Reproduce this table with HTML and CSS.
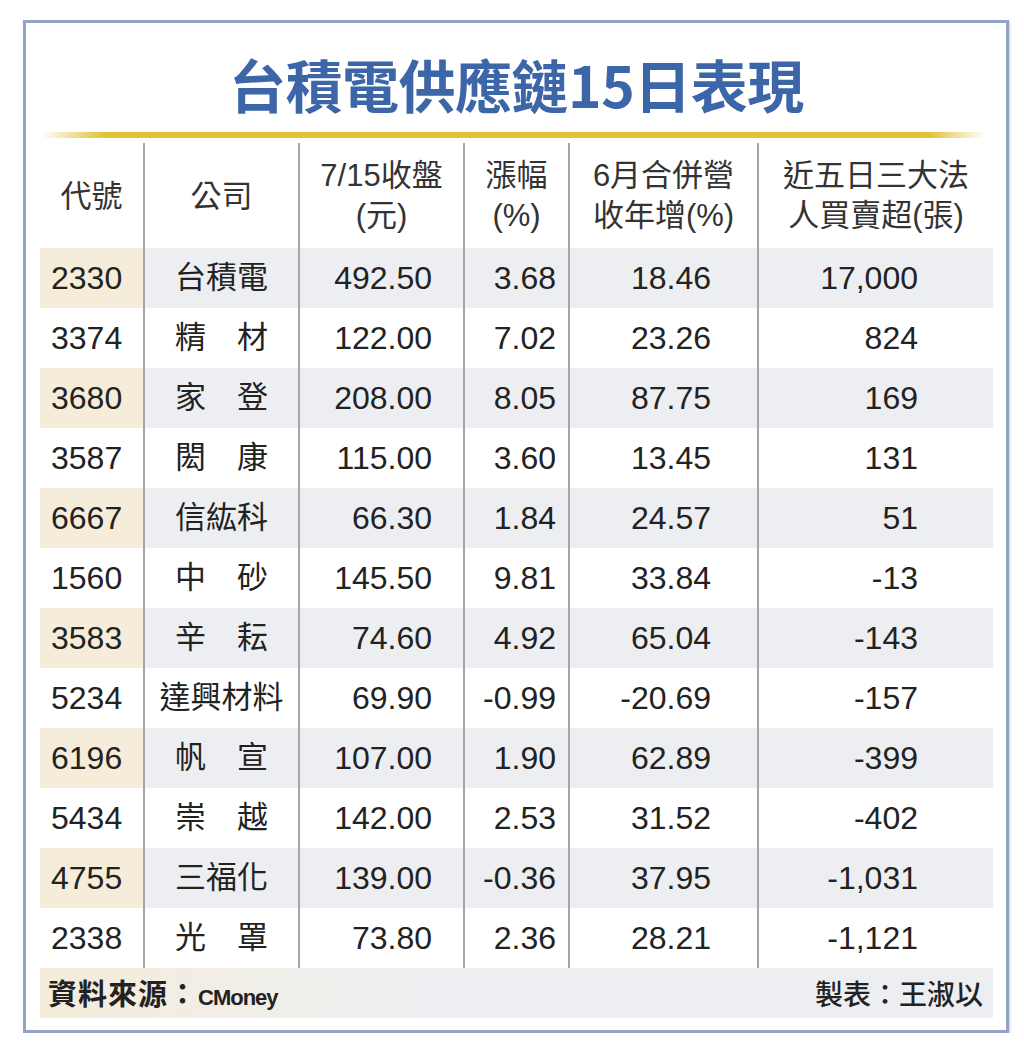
FILE: index.html
```html
<!DOCTYPE html>
<html lang="zh-Hant">
<head>
<meta charset="utf-8">
<title>台積電供應鏈15日表現</title>
<link rel="stylesheet" href="styles.css">
</head>
<body>
<div class="frame">
  <h1 class="title">台積電供應鏈15日表現</h1>
  <div class="gold"></div>
  <div class="table">
    <div class="row head">
      <div class="cell c1">代號</div>
      <div class="cell c2">公司</div>
      <div class="cell c3"><span>7/15收盤</span><span>(元)</span></div>
      <div class="cell c4"><span>漲幅</span><span>(%)</span></div>
      <div class="cell c5"><span>6月合併營</span><span>收年增(%)</span></div>
      <div class="cell c6"><span>近五日三大法</span><span>人買賣超(張)</span></div>
    </div>
    <div class="row alt"><div class="cell c1">2330</div><div class="cell c2">台積電</div><div class="cell c3">492.50</div><div class="cell c4">3.68</div><div class="cell c5">18.46</div><div class="cell c6">17,000</div></div>
    <div class="row"><div class="cell c1">3374</div><div class="cell c2">精　材</div><div class="cell c3">122.00</div><div class="cell c4">7.02</div><div class="cell c5">23.26</div><div class="cell c6">824</div></div>
    <div class="row alt"><div class="cell c1">3680</div><div class="cell c2">家　登</div><div class="cell c3">208.00</div><div class="cell c4">8.05</div><div class="cell c5">87.75</div><div class="cell c6">169</div></div>
    <div class="row"><div class="cell c1">3587</div><div class="cell c2">閎　康</div><div class="cell c3">115.00</div><div class="cell c4">3.60</div><div class="cell c5">13.45</div><div class="cell c6">131</div></div>
    <div class="row alt"><div class="cell c1">6667</div><div class="cell c2">信紘科</div><div class="cell c3">66.30</div><div class="cell c4">1.84</div><div class="cell c5">24.57</div><div class="cell c6">51</div></div>
    <div class="row"><div class="cell c1">1560</div><div class="cell c2">中　砂</div><div class="cell c3">145.50</div><div class="cell c4">9.81</div><div class="cell c5">33.84</div><div class="cell c6">-13</div></div>
    <div class="row alt"><div class="cell c1">3583</div><div class="cell c2">辛　耘</div><div class="cell c3">74.60</div><div class="cell c4">4.92</div><div class="cell c5">65.04</div><div class="cell c6">-143</div></div>
    <div class="row"><div class="cell c1">5234</div><div class="cell c2">達興材料</div><div class="cell c3">69.90</div><div class="cell c4">-0.99</div><div class="cell c5">-20.69</div><div class="cell c6">-157</div></div>
    <div class="row alt"><div class="cell c1">6196</div><div class="cell c2">帆　宣</div><div class="cell c3">107.00</div><div class="cell c4">1.90</div><div class="cell c5">62.89</div><div class="cell c6">-399</div></div>
    <div class="row"><div class="cell c1">5434</div><div class="cell c2">崇　越</div><div class="cell c3">142.00</div><div class="cell c4">2.53</div><div class="cell c5">31.52</div><div class="cell c6">-402</div></div>
    <div class="row alt"><div class="cell c1">4755</div><div class="cell c2">三福化</div><div class="cell c3">139.00</div><div class="cell c4">-0.36</div><div class="cell c5">37.95</div><div class="cell c6">-1,031</div></div>
    <div class="row"><div class="cell c1">2338</div><div class="cell c2">光　罩</div><div class="cell c3">73.80</div><div class="cell c4">2.36</div><div class="cell c5">28.21</div><div class="cell c6">-1,121</div></div>
    <div class="foot">
      <div class="source">資料來源：<span class="brand">CMoney</span></div>
      <div class="author">製表：王淑以</div>
    </div>
  </div>
</div>
</body>
</html>
```
FILE: styles.css
```css
* { box-sizing: border-box; }
html, body { margin: 0; padding: 0; background: #ffffff; }
body {
  font-family: "Liberation Sans", "Noto Sans CJK TC", sans-serif;
  color: #222;
}
.frame {
  margin: 20px 0 0 23px;
  width: 986px;
  height: 1013px;
  border: 3px solid #93a3c5;
  box-shadow: 1px 1px 2px rgba(120, 135, 170, 0.4);
  padding: 32px 13px 12px 14px;
  background: #fff;
}
.title {
  margin: 0;
  height: 56px;
  line-height: 56px;
  font-family: "Noto Sans CJK TC", sans-serif;
  font-size: 57px;
  font-weight: 700;
  color: #3d66a9;
  text-align: center;
  letter-spacing: -0.5px;
}
.gold {
  margin-top: 21px;
  width: 945px;
  height: 6px;
  border-radius: 3px;
  background: linear-gradient(to right, rgba(228, 196, 48, 0) 0, #e2c136 7%, #e3c234 50%, #e2c136 94%, rgba(228, 196, 48, 0) 100%);
  filter: blur(0.6px);
}
.table {
  margin-top: 5px;
  width: 953px;
}
.row {
  display: grid;
  grid-template-columns: 103px 155px 165px 105px 189px 236px;
  height: 60px;
}
.cell {
  display: flex;
  align-items: center;
  font-size: 32px;
  white-space: nowrap;
}
.cell + .cell { border-left: 2px solid #a6a6a6; }
.row .c1 { padding-left: 11px; }
.row .c2 {
  justify-content: center;
  font-family: "Noto Sans CJK TC", sans-serif;
  font-size: 31px;
  line-height: 1;
  padding-bottom: 8px;
}
.row .c3 { justify-content: flex-end; padding-right: 31px; }
.row .c4 { justify-content: flex-end; padding-right: 12px; }
.row .c5 { justify-content: flex-end; padding-right: 46px; }
.row .c6 { justify-content: flex-end; padding-right: 75px; }
.row.alt .cell { background: #edeef1; }
.row.alt .cell:first-child { background: #f5ecd9; }
.row.head {
  height: 105px;
}
.row.head .cell {
  flex-direction: column;
  justify-content: center;
  align-items: center;
  padding: 0;
  font-family: "Liberation Sans", "Noto Sans CJK TC", sans-serif;
  font-size: 31px;
  line-height: 40px;
  color: #333;
}
.row.head .c1, .row.head .c2 { padding-top: 2px; }
.foot {
  height: 50px;
  display: flex;
  align-items: center;
  justify-content: space-between;
  padding: 0 10px 0 8px;
  background: linear-gradient(to right, #f5ecd9 0, #f1eee8 22%, #edeef1 40%, #edeef1 100%);
  font-family: "Noto Sans CJK TC", sans-serif;
  color: #222;
  line-height: 1;
}
.source {
  font-size: 29px;
  font-weight: 700;
  letter-spacing: 1px;
}
.brand {
  font-family: "Liberation Sans", sans-serif;
  font-size: 22px;
  font-weight: 700;
  letter-spacing: -1px;
}
.author {
  font-size: 28px;
  font-weight: 500;
}
```
